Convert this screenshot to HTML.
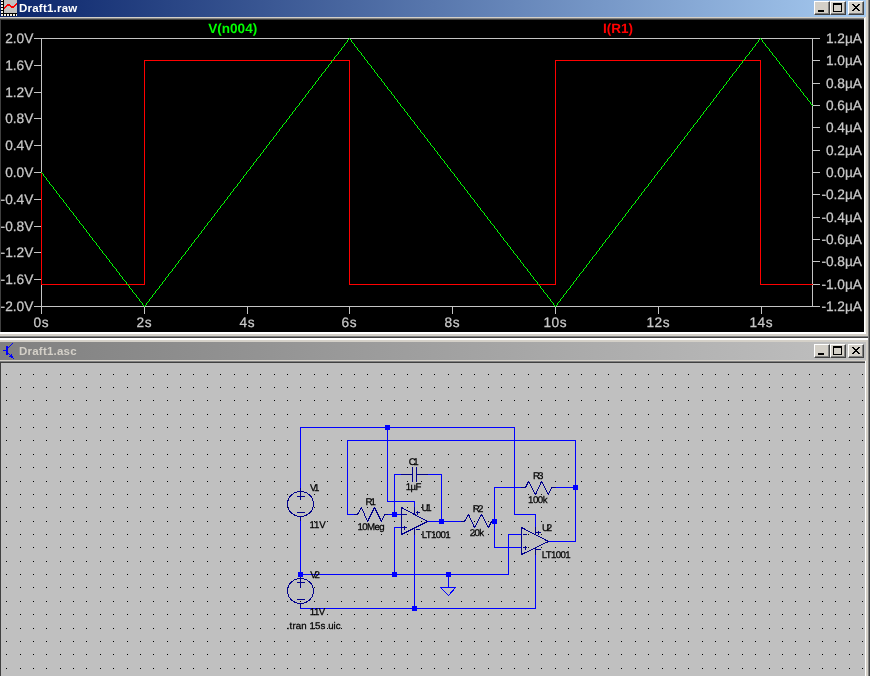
<!DOCTYPE html>
<html>
<head>
<meta charset="utf-8">
<title>LTspice - Draft1</title>
<style>
html,body{margin:0;padding:0;}
body{width:872px;height:676px;overflow:hidden;position:relative;background:#d4d0c8;font-family:"Liberation Sans", sans-serif;}
.abs{position:absolute;}
svg.abs,.ttl{will-change:transform;}
.tb{position:absolute;left:0;width:866px;}
.tb .ttl{position:absolute;left:18.5px;top:1px;font-weight:bold;font-size:11.5px;letter-spacing:0.22px;white-space:nowrap;}
.btn{position:absolute;width:16px;height:14px;box-sizing:border-box;background:#d4d0c8;
 border-top:1px solid #fff;border-left:1px solid #fff;border-right:1px solid #404040;border-bottom:1px solid #404040;}
.btn i{position:absolute;left:0;top:0;right:0;bottom:0;border-right:1px solid #808080;border-bottom:1px solid #808080;}
.btn svg{position:absolute;left:0;top:0;}
svg text{font-family:"Liberation Sans", sans-serif;text-rendering:geometricPrecision;}
</style>
</head>
<body>

<!-- ================= Window 1 : Draft1.raw (waveform) ================= -->
<div class="tb" id="tb1" style="top:0;height:17px;background:linear-gradient(to right,#0a246a 0%,#a6caf0 100%);">
  <svg class="abs" style="left:0;top:0" width="18" height="17" viewBox="0 0 18 17" shape-rendering="crispEdges">
    <rect x="1" y="0" width="16" height="16" fill="#000"/>
    <rect x="4" y="0" width="13" height="13" fill="#c0c0c0"/>
    <g fill="#f4f0e4">
      <rect x="1" y="0" width="2" height="1"/><rect x="1" y="2" width="2" height="2"/><rect x="1" y="5" width="2" height="2"/>
      <rect x="1" y="8" width="2" height="2"/><rect x="1" y="11" width="2" height="2"/><rect x="1" y="14" width="2" height="2"/>
      <rect x="4" y="14" width="2" height="2"/><rect x="7" y="14" width="2" height="2"/><rect x="10" y="14" width="2" height="2"/>
      <rect x="13" y="14" width="2" height="2"/><rect x="16" y="14" width="1" height="2"/>
    </g>
    <path d="M4 7h1v2h-1zM5 6h1v2h-1zM6 5h1v2h-1zM7 4h1v2h-1zM8 4h1v2h-1zM9 4h1v2h-1zM10 5h1v2h-1zM11 6h1v2h-1zM12 6h1v2h-1zM13 6h1v2h-1zM14 5h1v2h-1zM15 4h1v2h-1zM16 3h1v2h-1z" fill="#ff0000"/>
  </svg>
  <span class="ttl" style="color:#fff;line-height:16px;top:0;">Draft1.raw</span>
  <div class="btn" style="left:814px;top:1px;"><i></i><svg width="14" height="12" shape-rendering="crispEdges"><rect x="3" y="8" width="6" height="2" fill="#000"/></svg></div>
  <div class="btn" style="left:830px;top:1px;"><i></i><svg width="14" height="12" shape-rendering="crispEdges"><rect x="2.5" y="1.5" width="8" height="8" fill="none" stroke="#000"/><rect x="2" y="1" width="9" height="2" fill="#000"/></svg></div>
  <div class="btn" style="left:848px;top:1px;"><i></i><svg width="14" height="12" shape-rendering="crispEdges"><path d="M3 2h2v1h-2zM9 2h2v1h-2zM4 3h2v1h-2zM8 3h2v1h-2zM5 4h4v1h-4zM6 5h2v1h-2zM5 6h4v1h-4zM4 7h2v1h-2zM8 7h2v1h-2zM3 8h2v1h-2zM9 8h2v1h-2z" fill="#000"/></svg></div>
</div>
<div class="abs" style="left:0;top:17px;width:866px;height:1px;background:#d4d0c8;"></div>
<div class="abs" style="left:0;top:18px;width:865px;height:1px;background:#808080;"></div>
<div class="abs" style="left:0;top:19px;width:864px;height:1px;background:#404040;"></div>
<!-- client area -->
<div class="abs" id="plotwin" style="left:0;top:20px;width:864px;height:312px;background:#000;border-left:1px solid #404040;box-sizing:border-box;"></div>
<svg class="abs" style="left:0;top:0" width="872" height="340" viewBox="0 0 872 340" shape-rendering="crispEdges">
  <g stroke-width="1" fill="none">
    <line x1="41.5" y1="38.5" x2="41.5" y2="306.5" stroke="#c4c4c4"/><line x1="812.5" y1="38.5" x2="812.5" y2="306.5" stroke="#c4c4c4"/><line x1="34" y1="38.5" x2="819.5" y2="38.5" stroke="#c4c4c4"/><line x1="34" y1="306.5" x2="819.5" y2="306.5" stroke="#c4c4c4"/><line x1="34" y1="38.5" x2="41" y2="38.5" stroke="#c4c4c4"/><line x1="34" y1="65.5" x2="41" y2="65.5" stroke="#c4c4c4"/><line x1="34" y1="92.5" x2="41" y2="92.5" stroke="#c4c4c4"/><line x1="34" y1="118.5" x2="41" y2="118.5" stroke="#c4c4c4"/><line x1="34" y1="145.5" x2="41" y2="145.5" stroke="#c4c4c4"/><line x1="34" y1="172.5" x2="41" y2="172.5" stroke="#c4c4c4"/><line x1="34" y1="199.5" x2="41" y2="199.5" stroke="#c4c4c4"/><line x1="34" y1="226.5" x2="41" y2="226.5" stroke="#c4c4c4"/><line x1="34" y1="252.5" x2="41" y2="252.5" stroke="#c4c4c4"/><line x1="34" y1="279.5" x2="41" y2="279.5" stroke="#c4c4c4"/><line x1="34" y1="306.5" x2="41" y2="306.5" stroke="#c4c4c4"/><line x1="812" y1="38.5" x2="819.5" y2="38.5" stroke="#c4c4c4"/><line x1="812" y1="60.5" x2="819.5" y2="60.5" stroke="#c4c4c4"/><line x1="812" y1="83.5" x2="819.5" y2="83.5" stroke="#c4c4c4"/><line x1="812" y1="105.5" x2="819.5" y2="105.5" stroke="#c4c4c4"/><line x1="812" y1="127.5" x2="819.5" y2="127.5" stroke="#c4c4c4"/><line x1="812" y1="150.5" x2="819.5" y2="150.5" stroke="#c4c4c4"/><line x1="812" y1="172.5" x2="819.5" y2="172.5" stroke="#c4c4c4"/><line x1="812" y1="194.5" x2="819.5" y2="194.5" stroke="#c4c4c4"/><line x1="812" y1="217.5" x2="819.5" y2="217.5" stroke="#c4c4c4"/><line x1="812" y1="239.5" x2="819.5" y2="239.5" stroke="#c4c4c4"/><line x1="812" y1="261.5" x2="819.5" y2="261.5" stroke="#c4c4c4"/><line x1="812" y1="284.5" x2="819.5" y2="284.5" stroke="#c4c4c4"/><line x1="812" y1="306.5" x2="819.5" y2="306.5" stroke="#c4c4c4"/><line x1="41.5" y1="306" x2="41.5" y2="314" stroke="#c4c4c4"/><line x1="144.5" y1="306" x2="144.5" y2="314" stroke="#c4c4c4"/><line x1="247.5" y1="306" x2="247.5" y2="314" stroke="#c4c4c4"/><line x1="349.5" y1="306" x2="349.5" y2="314" stroke="#c4c4c4"/><line x1="452.5" y1="306" x2="452.5" y2="314" stroke="#c4c4c4"/><line x1="555.5" y1="306" x2="555.5" y2="314" stroke="#c4c4c4"/><line x1="658.5" y1="306" x2="658.5" y2="314" stroke="#c4c4c4"/><line x1="761.5" y1="306" x2="761.5" y2="314" stroke="#c4c4c4"/>
    <polyline points="41.5,172.5 41.5,284.5 144.5,284.5 144.5,60.5 349.5,60.5 349.5,284.5 555.5,284.5 555.5,60.5 760.5,60.5 760.5,284.5 812.5,284.5" stroke="#ff0000"/>
    <path d="M41 172h1v1h-1zM42 173h1v1h-1zM43 174h1v2h-1zM44 176h1v1h-1zM45 177h1v1h-1zM46 178h1v2h-1zM47 180h1v1h-1zM48 181h1v1h-1zM49 182h1v2h-1zM50 184h1v1h-1zM51 185h1v1h-1zM52 186h1v1h-1zM53 187h1v2h-1zM54 189h1v1h-1zM55 190h1v1h-1zM56 191h1v2h-1zM57 193h1v1h-1zM58 194h1v1h-1zM59 195h1v2h-1zM60 197h1v1h-1zM61 198h1v1h-1zM62 199h1v1h-1zM63 200h1v2h-1zM64 202h1v1h-1zM65 203h1v1h-1zM66 204h1v2h-1zM67 206h1v1h-1zM68 207h1v1h-1zM69 208h1v2h-1zM70 210h1v1h-1zM71 211h1v1h-1zM72 212h1v1h-1zM73 213h1v2h-1zM74 215h1v1h-1zM75 216h1v1h-1zM76 217h1v2h-1zM77 219h1v1h-1zM78 220h1v1h-1zM79 221h1v2h-1zM80 223h1v1h-1zM81 224h1v1h-1zM82 225h1v1h-1zM83 226h1v2h-1zM84 228h1v1h-1zM85 229h1v1h-1zM86 230h1v2h-1zM87 232h1v1h-1zM88 233h1v1h-1zM89 234h1v2h-1zM90 236h1v1h-1zM91 237h1v1h-1zM92 238h1v2h-1zM93 240h1v1h-1zM94 241h1v1h-1zM95 242h1v1h-1zM96 243h1v2h-1zM97 245h1v1h-1zM98 246h1v1h-1zM99 247h1v2h-1zM100 249h1v1h-1zM101 250h1v1h-1zM102 251h1v2h-1zM103 253h1v1h-1zM104 254h1v1h-1zM105 255h1v1h-1zM106 256h1v2h-1zM107 258h1v1h-1zM108 259h1v1h-1zM109 260h1v2h-1zM110 262h1v1h-1zM111 263h1v1h-1zM112 264h1v2h-1zM113 266h1v1h-1zM114 267h1v1h-1zM115 268h1v1h-1zM116 269h1v2h-1zM117 271h1v1h-1zM118 272h1v1h-1zM119 273h1v2h-1zM120 275h1v1h-1zM121 276h1v1h-1zM122 277h1v2h-1zM123 279h1v1h-1zM124 280h1v1h-1zM125 281h1v1h-1zM126 282h1v2h-1zM127 284h1v1h-1zM128 285h1v1h-1zM129 286h1v2h-1zM130 288h1v1h-1zM131 289h1v1h-1zM132 290h1v2h-1zM133 292h1v1h-1zM134 293h1v1h-1zM135 294h1v1h-1zM136 295h1v2h-1zM137 297h1v1h-1zM138 298h1v1h-1zM139 299h1v2h-1zM140 301h1v1h-1zM141 302h1v1h-1zM142 303h1v2h-1zM143 305h1v1h-1zM144 306h1v1h-1zM145 305h1v1h-1zM146 303h1v2h-1zM147 302h1v1h-1zM148 301h1v1h-1zM149 299h1v2h-1zM150 298h1v1h-1zM151 297h1v1h-1zM152 295h1v2h-1zM153 294h1v1h-1zM154 293h1v1h-1zM155 291h1v2h-1zM156 290h1v1h-1zM157 289h1v1h-1zM158 288h1v1h-1zM159 286h1v2h-1zM160 285h1v1h-1zM161 284h1v1h-1zM162 282h1v2h-1zM163 281h1v1h-1zM164 280h1v1h-1zM165 278h1v2h-1zM166 277h1v1h-1zM167 276h1v1h-1zM168 274h1v2h-1zM169 273h1v1h-1zM170 272h1v1h-1zM171 271h1v1h-1zM172 269h1v2h-1zM173 268h1v1h-1zM174 267h1v1h-1zM175 265h1v2h-1zM176 264h1v1h-1zM177 263h1v1h-1zM178 261h1v2h-1zM179 260h1v1h-1zM180 259h1v1h-1zM181 257h1v2h-1zM182 256h1v1h-1zM183 255h1v1h-1zM184 254h1v1h-1zM185 252h1v2h-1zM186 251h1v1h-1zM187 250h1v1h-1zM188 248h1v2h-1zM189 247h1v1h-1zM190 246h1v1h-1zM191 244h1v2h-1zM192 243h1v1h-1zM193 242h1v1h-1zM194 240h1v2h-1zM195 239h1v1h-1zM196 238h1v1h-1zM197 237h1v1h-1zM198 235h1v2h-1zM199 234h1v1h-1zM200 233h1v1h-1zM201 231h1v2h-1zM202 230h1v1h-1zM203 229h1v1h-1zM204 227h1v2h-1zM205 226h1v1h-1zM206 225h1v1h-1zM207 223h1v2h-1zM208 222h1v1h-1zM209 221h1v1h-1zM210 220h1v1h-1zM211 218h1v2h-1zM212 217h1v1h-1zM213 216h1v1h-1zM214 214h1v2h-1zM215 213h1v1h-1zM216 212h1v1h-1zM217 210h1v2h-1zM218 209h1v1h-1zM219 208h1v1h-1zM220 206h1v2h-1zM221 205h1v1h-1zM222 204h1v1h-1zM223 203h1v1h-1zM224 201h1v2h-1zM225 200h1v1h-1zM226 199h1v1h-1zM227 197h1v2h-1zM228 196h1v1h-1zM229 195h1v1h-1zM230 193h1v2h-1zM231 192h1v1h-1zM232 191h1v1h-1zM233 189h1v2h-1zM234 188h1v1h-1zM235 187h1v1h-1zM236 186h1v1h-1zM237 184h1v2h-1zM238 183h1v1h-1zM239 182h1v1h-1zM240 180h1v2h-1zM241 179h1v1h-1zM242 178h1v1h-1zM243 176h1v2h-1zM244 175h1v1h-1zM245 174h1v1h-1zM246 172h1v2h-1zM247 171h1v1h-1zM248 170h1v1h-1zM249 169h1v1h-1zM250 167h1v2h-1zM251 166h1v1h-1zM252 165h1v1h-1zM253 163h1v2h-1zM254 162h1v1h-1zM255 161h1v1h-1zM256 159h1v2h-1zM257 158h1v1h-1zM258 157h1v1h-1zM259 156h1v1h-1zM260 154h1v2h-1zM261 153h1v1h-1zM262 152h1v1h-1zM263 150h1v2h-1zM264 149h1v1h-1zM265 148h1v1h-1zM266 146h1v2h-1zM267 145h1v1h-1zM268 144h1v1h-1zM269 142h1v2h-1zM270 141h1v1h-1zM271 140h1v1h-1zM272 139h1v1h-1zM273 137h1v2h-1zM274 136h1v1h-1zM275 135h1v1h-1zM276 133h1v2h-1zM277 132h1v1h-1zM278 131h1v1h-1zM279 129h1v2h-1zM280 128h1v1h-1zM281 127h1v1h-1zM282 125h1v2h-1zM283 124h1v1h-1zM284 123h1v1h-1zM285 122h1v1h-1zM286 120h1v2h-1zM287 119h1v1h-1zM288 118h1v1h-1zM289 116h1v2h-1zM290 115h1v1h-1zM291 114h1v1h-1zM292 112h1v2h-1zM293 111h1v1h-1zM294 110h1v1h-1zM295 108h1v2h-1zM296 107h1v1h-1zM297 106h1v1h-1zM298 105h1v1h-1zM299 103h1v2h-1zM300 102h1v1h-1zM301 101h1v1h-1zM302 99h1v2h-1zM303 98h1v1h-1zM304 97h1v1h-1zM305 95h1v2h-1zM306 94h1v1h-1zM307 93h1v1h-1zM308 91h1v2h-1zM309 90h1v1h-1zM310 89h1v1h-1zM311 88h1v1h-1zM312 86h1v2h-1zM313 85h1v1h-1zM314 84h1v1h-1zM315 82h1v2h-1zM316 81h1v1h-1zM317 80h1v1h-1zM318 78h1v2h-1zM319 77h1v1h-1zM320 76h1v1h-1zM321 74h1v2h-1zM322 73h1v1h-1zM323 72h1v1h-1zM324 71h1v1h-1zM325 69h1v2h-1zM326 68h1v1h-1zM327 67h1v1h-1zM328 65h1v2h-1zM329 64h1v1h-1zM330 63h1v1h-1zM331 61h1v2h-1zM332 60h1v1h-1zM333 59h1v1h-1zM334 57h1v2h-1zM335 56h1v1h-1zM336 55h1v1h-1zM337 54h1v1h-1zM338 52h1v2h-1zM339 51h1v1h-1zM340 50h1v1h-1zM341 48h1v2h-1zM342 47h1v1h-1zM343 46h1v1h-1zM344 44h1v2h-1zM345 43h1v1h-1zM346 42h1v1h-1zM347 40h1v2h-1zM348 39h1v1h-1zM349 38h1v1h-1zM350 39h1v1h-1zM351 40h1v2h-1zM352 42h1v1h-1zM353 43h1v1h-1zM354 44h1v2h-1zM355 46h1v1h-1zM356 47h1v1h-1zM357 48h1v2h-1zM358 50h1v1h-1zM359 51h1v1h-1zM360 52h1v1h-1zM361 53h1v2h-1zM362 55h1v1h-1zM363 56h1v1h-1zM364 57h1v2h-1zM365 59h1v1h-1zM366 60h1v1h-1zM367 61h1v2h-1zM368 63h1v1h-1zM369 64h1v1h-1zM370 65h1v1h-1zM371 66h1v2h-1zM372 68h1v1h-1zM373 69h1v1h-1zM374 70h1v2h-1zM375 72h1v1h-1zM376 73h1v1h-1zM377 74h1v2h-1zM378 76h1v1h-1zM379 77h1v1h-1zM380 78h1v1h-1zM381 79h1v2h-1zM382 81h1v1h-1zM383 82h1v1h-1zM384 83h1v2h-1zM385 85h1v1h-1zM386 86h1v1h-1zM387 87h1v2h-1zM388 89h1v1h-1zM389 90h1v1h-1zM390 91h1v1h-1zM391 92h1v2h-1zM392 94h1v1h-1zM393 95h1v1h-1zM394 96h1v2h-1zM395 98h1v1h-1zM396 99h1v1h-1zM397 100h1v2h-1zM398 102h1v1h-1zM399 103h1v1h-1zM400 104h1v2h-1zM401 106h1v1h-1zM402 107h1v1h-1zM403 108h1v1h-1zM404 109h1v2h-1zM405 111h1v1h-1zM406 112h1v1h-1zM407 113h1v2h-1zM408 115h1v1h-1zM409 116h1v1h-1zM410 117h1v2h-1zM411 119h1v1h-1zM412 120h1v1h-1zM413 121h1v1h-1zM414 122h1v2h-1zM415 124h1v1h-1zM416 125h1v1h-1zM417 126h1v2h-1zM418 128h1v1h-1zM419 129h1v1h-1zM420 130h1v2h-1zM421 132h1v1h-1zM422 133h1v1h-1zM423 134h1v1h-1zM424 135h1v2h-1zM425 137h1v1h-1zM426 138h1v1h-1zM427 139h1v2h-1zM428 141h1v1h-1zM429 142h1v1h-1zM430 143h1v2h-1zM431 145h1v1h-1zM432 146h1v1h-1zM433 147h1v1h-1zM434 148h1v2h-1zM435 150h1v1h-1zM436 151h1v1h-1zM437 152h1v2h-1zM438 154h1v1h-1zM439 155h1v1h-1zM440 156h1v2h-1zM441 158h1v1h-1zM442 159h1v1h-1zM443 160h1v1h-1zM444 161h1v2h-1zM445 163h1v1h-1zM446 164h1v1h-1zM447 165h1v2h-1zM448 167h1v1h-1zM449 168h1v1h-1zM450 169h1v2h-1zM451 171h1v1h-1zM452 172h1v1h-1zM453 173h1v1h-1zM454 174h1v2h-1zM455 176h1v1h-1zM456 177h1v1h-1zM457 178h1v2h-1zM458 180h1v1h-1zM459 181h1v1h-1zM460 182h1v2h-1zM461 184h1v1h-1zM462 185h1v1h-1zM463 186h1v1h-1zM464 187h1v2h-1zM465 189h1v1h-1zM466 190h1v1h-1zM467 191h1v2h-1zM468 193h1v1h-1zM469 194h1v1h-1zM470 195h1v2h-1zM471 197h1v1h-1zM472 198h1v1h-1zM473 199h1v1h-1zM474 200h1v2h-1zM475 202h1v1h-1zM476 203h1v1h-1zM477 204h1v2h-1zM478 206h1v1h-1zM479 207h1v1h-1zM480 208h1v2h-1zM481 210h1v1h-1zM482 211h1v1h-1zM483 212h1v1h-1zM484 213h1v2h-1zM485 215h1v1h-1zM486 216h1v1h-1zM487 217h1v2h-1zM488 219h1v1h-1zM489 220h1v1h-1zM490 221h1v2h-1zM491 223h1v1h-1zM492 224h1v1h-1zM493 225h1v1h-1zM494 226h1v2h-1zM495 228h1v1h-1zM496 229h1v1h-1zM497 230h1v2h-1zM498 232h1v1h-1zM499 233h1v1h-1zM500 234h1v2h-1zM501 236h1v1h-1zM502 237h1v1h-1zM503 238h1v2h-1zM504 240h1v1h-1zM505 241h1v1h-1zM506 242h1v1h-1zM507 243h1v2h-1zM508 245h1v1h-1zM509 246h1v1h-1zM510 247h1v2h-1zM511 249h1v1h-1zM512 250h1v1h-1zM513 251h1v2h-1zM514 253h1v1h-1zM515 254h1v1h-1zM516 255h1v1h-1zM517 256h1v2h-1zM518 258h1v1h-1zM519 259h1v1h-1zM520 260h1v2h-1zM521 262h1v1h-1zM522 263h1v1h-1zM523 264h1v2h-1zM524 266h1v1h-1zM525 267h1v1h-1zM526 268h1v1h-1zM527 269h1v2h-1zM528 271h1v1h-1zM529 272h1v1h-1zM530 273h1v2h-1zM531 275h1v1h-1zM532 276h1v1h-1zM533 277h1v2h-1zM534 279h1v1h-1zM535 280h1v1h-1zM536 281h1v1h-1zM537 282h1v2h-1zM538 284h1v1h-1zM539 285h1v1h-1zM540 286h1v2h-1zM541 288h1v1h-1zM542 289h1v1h-1zM543 290h1v2h-1zM544 292h1v1h-1zM545 293h1v1h-1zM546 294h1v1h-1zM547 295h1v2h-1zM548 297h1v1h-1zM549 298h1v1h-1zM550 299h1v2h-1zM551 301h1v1h-1zM552 302h1v1h-1zM553 303h1v2h-1zM554 305h1v1h-1zM555 306h1v1h-1zM556 305h1v1h-1zM557 303h1v2h-1zM558 302h1v1h-1zM559 301h1v1h-1zM560 299h1v2h-1zM561 298h1v1h-1zM562 297h1v1h-1zM563 295h1v2h-1zM564 294h1v1h-1zM565 293h1v1h-1zM566 291h1v2h-1zM567 290h1v1h-1zM568 289h1v1h-1zM569 288h1v1h-1zM570 286h1v2h-1zM571 285h1v1h-1zM572 284h1v1h-1zM573 282h1v2h-1zM574 281h1v1h-1zM575 280h1v1h-1zM576 278h1v2h-1zM577 277h1v1h-1zM578 276h1v1h-1zM579 274h1v2h-1zM580 273h1v1h-1zM581 272h1v1h-1zM582 271h1v1h-1zM583 269h1v2h-1zM584 268h1v1h-1zM585 267h1v1h-1zM586 265h1v2h-1zM587 264h1v1h-1zM588 263h1v1h-1zM589 261h1v2h-1zM590 260h1v1h-1zM591 259h1v1h-1zM592 257h1v2h-1zM593 256h1v1h-1zM594 255h1v1h-1zM595 254h1v1h-1zM596 252h1v2h-1zM597 251h1v1h-1zM598 250h1v1h-1zM599 248h1v2h-1zM600 247h1v1h-1zM601 246h1v1h-1zM602 244h1v2h-1zM603 243h1v1h-1zM604 242h1v1h-1zM605 240h1v2h-1zM606 239h1v1h-1zM607 238h1v1h-1zM608 237h1v1h-1zM609 235h1v2h-1zM610 234h1v1h-1zM611 233h1v1h-1zM612 231h1v2h-1zM613 230h1v1h-1zM614 229h1v1h-1zM615 227h1v2h-1zM616 226h1v1h-1zM617 225h1v1h-1zM618 223h1v2h-1zM619 222h1v1h-1zM620 221h1v1h-1zM621 220h1v1h-1zM622 218h1v2h-1zM623 217h1v1h-1zM624 216h1v1h-1zM625 214h1v2h-1zM626 213h1v1h-1zM627 212h1v1h-1zM628 210h1v2h-1zM629 209h1v1h-1zM630 208h1v1h-1zM631 206h1v2h-1zM632 205h1v1h-1zM633 204h1v1h-1zM634 203h1v1h-1zM635 201h1v2h-1zM636 200h1v1h-1zM637 199h1v1h-1zM638 197h1v2h-1zM639 196h1v1h-1zM640 195h1v1h-1zM641 193h1v2h-1zM642 192h1v1h-1zM643 191h1v1h-1zM644 189h1v2h-1zM645 188h1v1h-1zM646 187h1v1h-1zM647 186h1v1h-1zM648 184h1v2h-1zM649 183h1v1h-1zM650 182h1v1h-1zM651 180h1v2h-1zM652 179h1v1h-1zM653 178h1v1h-1zM654 176h1v2h-1zM655 175h1v1h-1zM656 174h1v1h-1zM657 172h1v2h-1zM658 171h1v1h-1zM659 170h1v1h-1zM660 169h1v1h-1zM661 167h1v2h-1zM662 166h1v1h-1zM663 165h1v1h-1zM664 163h1v2h-1zM665 162h1v1h-1zM666 161h1v1h-1zM667 159h1v2h-1zM668 158h1v1h-1zM669 157h1v1h-1zM670 156h1v1h-1zM671 154h1v2h-1zM672 153h1v1h-1zM673 152h1v1h-1zM674 150h1v2h-1zM675 149h1v1h-1zM676 148h1v1h-1zM677 146h1v2h-1zM678 145h1v1h-1zM679 144h1v1h-1zM680 142h1v2h-1zM681 141h1v1h-1zM682 140h1v1h-1zM683 139h1v1h-1zM684 137h1v2h-1zM685 136h1v1h-1zM686 135h1v1h-1zM687 133h1v2h-1zM688 132h1v1h-1zM689 131h1v1h-1zM690 129h1v2h-1zM691 128h1v1h-1zM692 127h1v1h-1zM693 125h1v2h-1zM694 124h1v1h-1zM695 123h1v1h-1zM696 122h1v1h-1zM697 120h1v2h-1zM698 119h1v1h-1zM699 118h1v1h-1zM700 116h1v2h-1zM701 115h1v1h-1zM702 114h1v1h-1zM703 112h1v2h-1zM704 111h1v1h-1zM705 110h1v1h-1zM706 108h1v2h-1zM707 107h1v1h-1zM708 106h1v1h-1zM709 105h1v1h-1zM710 103h1v2h-1zM711 102h1v1h-1zM712 101h1v1h-1zM713 99h1v2h-1zM714 98h1v1h-1zM715 97h1v1h-1zM716 95h1v2h-1zM717 94h1v1h-1zM718 93h1v1h-1zM719 91h1v2h-1zM720 90h1v1h-1zM721 89h1v1h-1zM722 88h1v1h-1zM723 86h1v2h-1zM724 85h1v1h-1zM725 84h1v1h-1zM726 82h1v2h-1zM727 81h1v1h-1zM728 80h1v1h-1zM729 78h1v2h-1zM730 77h1v1h-1zM731 76h1v1h-1zM732 74h1v2h-1zM733 73h1v1h-1zM734 72h1v1h-1zM735 71h1v1h-1zM736 69h1v2h-1zM737 68h1v1h-1zM738 67h1v1h-1zM739 65h1v2h-1zM740 64h1v1h-1zM741 63h1v1h-1zM742 61h1v2h-1zM743 60h1v1h-1zM744 59h1v1h-1zM745 57h1v2h-1zM746 56h1v1h-1zM747 55h1v1h-1zM748 54h1v1h-1zM749 52h1v2h-1zM750 51h1v1h-1zM751 50h1v1h-1zM752 48h1v2h-1zM753 47h1v1h-1zM754 46h1v1h-1zM755 44h1v2h-1zM756 43h1v1h-1zM757 42h1v1h-1zM758 40h1v2h-1zM759 39h1v1h-1zM760 38h1v1h-1zM761 39h1v1h-1zM762 40h1v2h-1zM763 42h1v1h-1zM764 43h1v1h-1zM765 44h1v2h-1zM766 46h1v1h-1zM767 47h1v1h-1zM768 48h1v1h-1zM769 49h1v2h-1zM770 51h1v1h-1zM771 52h1v1h-1zM772 53h1v2h-1zM773 55h1v1h-1zM774 56h1v1h-1zM775 57h1v1h-1zM776 58h1v2h-1zM777 60h1v1h-1zM778 61h1v1h-1zM779 62h1v2h-1zM780 64h1v1h-1zM781 65h1v1h-1zM782 66h1v1h-1zM783 67h1v2h-1zM784 69h1v1h-1zM785 70h1v1h-1zM786 71h1v2h-1zM787 73h1v1h-1zM788 74h1v1h-1zM789 75h1v2h-1zM790 77h1v1h-1zM791 78h1v1h-1zM792 79h1v1h-1zM793 80h1v2h-1zM794 82h1v1h-1zM795 83h1v1h-1zM796 84h1v2h-1zM797 86h1v1h-1zM798 87h1v1h-1zM799 88h1v1h-1zM800 89h1v2h-1zM801 91h1v1h-1zM802 92h1v1h-1zM803 93h1v2h-1zM804 95h1v1h-1zM805 96h1v1h-1zM806 97h1v1h-1zM807 98h1v2h-1zM808 100h1v1h-1zM809 101h1v1h-1zM810 102h1v2h-1zM811 104h1v1h-1zM812 105h1v1h-1z" fill="#00ff00" stroke="none"/>
  </g>
  <g font-size="13.7px" fill="#c8c8c8" stroke="#c8c8c8" stroke-width="0.25">
    <text x="33.3" y="42.9" text-anchor="end">2.0V</text><text x="33.3" y="69.9" text-anchor="end">1.6V</text><text x="33.3" y="96.9" text-anchor="end">1.2V</text><text x="33.3" y="122.9" text-anchor="end">0.8V</text><text x="33.3" y="149.9" text-anchor="end">0.4V</text><text x="33.3" y="176.9" text-anchor="end">0.0V</text><text x="33.3" y="203.9" text-anchor="end">-0.4V</text><text x="33.3" y="230.9" text-anchor="end">-0.8V</text><text x="33.3" y="256.9" text-anchor="end">-1.2V</text><text x="33.3" y="283.9" text-anchor="end">-1.6V</text><text x="33.3" y="310.9" text-anchor="end">-2.0V</text><text x="862" y="42.9" text-anchor="end">1.2µA</text><text x="862" y="64.9" text-anchor="end">1.0µA</text><text x="862" y="87.9" text-anchor="end">0.8µA</text><text x="862" y="109.9" text-anchor="end">0.6µA</text><text x="862" y="131.9" text-anchor="end">0.4µA</text><text x="862" y="154.9" text-anchor="end">0.2µA</text><text x="862" y="176.9" text-anchor="end">0.0µA</text><text x="862" y="198.9" text-anchor="end">-0.2µA</text><text x="862" y="221.9" text-anchor="end">-0.4µA</text><text x="862" y="243.9" text-anchor="end">-0.6µA</text><text x="862" y="265.9" text-anchor="end">-0.8µA</text><text x="862" y="288.9" text-anchor="end">-1.0µA</text><text x="862" y="310.9" text-anchor="end">-1.2µA</text><text x="41.3" y="327" text-anchor="middle" letter-spacing="0.5">0s</text><text x="144.3" y="327" text-anchor="middle" letter-spacing="0.5">2s</text><text x="247.3" y="327" text-anchor="middle" letter-spacing="0.5">4s</text><text x="349.3" y="327" text-anchor="middle" letter-spacing="0.5">6s</text><text x="452.3" y="327" text-anchor="middle" letter-spacing="0.5">8s</text><text x="555.3" y="327" text-anchor="middle" letter-spacing="0.5">10s</text><text x="658.3" y="327" text-anchor="middle" letter-spacing="0.5">12s</text><text x="761.3" y="327" text-anchor="middle" letter-spacing="0.5">14s</text>
  </g>
  <text x="232.7" y="33" font-size="13.6px" font-weight="bold" fill="#00ff00" text-anchor="middle">V(n004)</text>
  <text x="618" y="33" font-size="13.6px" font-weight="bold" fill="#ff0000" text-anchor="middle">I(R1)</text>
</svg>
<!-- window-1 bottom / right frame -->
<div class="abs" style="left:864px;top:18px;width:1px;height:316px;background:#fff;"></div>
<div class="abs" style="left:865px;top:17px;width:1px;height:317px;background:#f0eee8;"></div>
<div class="abs" style="left:0;top:332px;width:866px;height:2px;background:#fff;"></div>
<div class="abs" style="left:0;top:334px;width:868px;height:2px;background:#d4d0c8;"></div>
<div class="abs" style="left:0;top:336px;width:869px;height:1px;background:#808080;"></div>
<div class="abs" style="left:0;top:337px;width:870px;height:1px;background:#404040;"></div>

<!-- ================= Window 2 : Draft1.asc (schematic) ================= -->
<div class="abs" style="left:0;top:338px;width:868px;height:2px;background:#fff;"></div>
<div class="abs" style="left:0;top:340px;width:868px;height:2px;background:#d4d0c8;"></div>
<div class="tb" id="tb2" style="top:342px;height:18px;background:linear-gradient(to right,#808080 0%,#c0c0c0 100%);">
  <svg class="abs" style="left:0;top:0" width="18" height="18" viewBox="0 0 18 18" shape-rendering="crispEdges">
    <g fill="#0000ff"><rect x="6" y="4" width="2" height="9"/><rect x="3" y="8" width="3" height="1"/><path d="M8 5h1v1h-1zM9 4h1v1h-1zM10 3h1v1h-1zM11 2h1v1h-1zM12 1h1v1h-1zM8 11h1v1h-1zM9 12h1v1h-1zM10 13h1v1h-1zM11 14h1v1h-1zM12 15h1v1h-1zM13 16h1v1h-1zM9 14h1v1h-1zM10 14h1v1h-1zM12 14h1v1h-1zM11 12h1v1h-1zM11 13h1v1h-1zM11 15h1v1h-1z"/></g>
  </svg>
  <span class="ttl" style="color:#d4d0c8;line-height:17px;">Draft1.asc</span>
  <div class="btn" style="left:814px;top:2px;"><i></i><svg width="14" height="12" shape-rendering="crispEdges"><rect x="3" y="8" width="6" height="2" fill="#000"/></svg></div>
  <div class="btn" style="left:830px;top:2px;"><i></i><svg width="14" height="12" shape-rendering="crispEdges"><rect x="2.5" y="1.5" width="8" height="8" fill="none" stroke="#000"/><rect x="2" y="1" width="9" height="2" fill="#000"/></svg></div>
  <div class="btn" style="left:848px;top:2px;"><i></i><svg width="14" height="12" shape-rendering="crispEdges"><path d="M3 2h2v1h-2zM9 2h2v1h-2zM4 3h2v1h-2zM8 3h2v1h-2zM5 4h4v1h-4zM6 5h2v1h-2zM5 6h4v1h-4zM4 7h2v1h-2zM8 7h2v1h-2zM3 8h2v1h-2zM9 8h2v1h-2z" fill="#000"/></svg></div>
</div>
<div class="abs" style="left:0;top:360px;width:866px;height:1px;background:#d4d0c8;"></div>
<div class="abs" style="left:0;top:361px;width:865px;height:1px;background:#808080;"></div>
<div class="abs" style="left:0;top:362px;width:865px;height:1px;background:#404040;"></div>
<div class="abs" id="schwin" style="left:0;top:363px;width:865px;height:313px;background:#c0c0c0;border-left:1px solid #404040;box-sizing:border-box;"></div>
<div class="abs" style="left:865px;top:361px;width:1px;height:315px;background:#fff;"></div>
<svg class="abs" style="left:0;top:0" width="872" height="676" viewBox="0 0 872 676" shape-rendering="crispEdges">
  <path d="M6 374h1v1h-1zM20 374h1v1h-1zM33 374h1v1h-1zM46 374h1v1h-1zM60 374h1v1h-1zM73 374h1v1h-1zM86 374h1v1h-1zM100 374h1v1h-1zM113 374h1v1h-1zM127 374h1v1h-1zM140 374h1v1h-1zM153 374h1v1h-1zM167 374h1v1h-1zM180 374h1v1h-1zM193 374h1v1h-1zM207 374h1v1h-1zM220 374h1v1h-1zM234 374h1v1h-1zM247 374h1v1h-1zM260 374h1v1h-1zM274 374h1v1h-1zM287 374h1v1h-1zM300 374h1v1h-1zM314 374h1v1h-1zM327 374h1v1h-1zM341 374h1v1h-1zM354 374h1v1h-1zM367 374h1v1h-1zM381 374h1v1h-1zM394 374h1v1h-1zM407 374h1v1h-1zM421 374h1v1h-1zM434 374h1v1h-1zM448 374h1v1h-1zM461 374h1v1h-1zM474 374h1v1h-1zM488 374h1v1h-1zM501 374h1v1h-1zM514 374h1v1h-1zM528 374h1v1h-1zM541 374h1v1h-1zM555 374h1v1h-1zM568 374h1v1h-1zM581 374h1v1h-1zM595 374h1v1h-1zM608 374h1v1h-1zM621 374h1v1h-1zM635 374h1v1h-1zM648 374h1v1h-1zM662 374h1v1h-1zM675 374h1v1h-1zM688 374h1v1h-1zM702 374h1v1h-1zM715 374h1v1h-1zM728 374h1v1h-1zM742 374h1v1h-1zM755 374h1v1h-1zM769 374h1v1h-1zM782 374h1v1h-1zM795 374h1v1h-1zM809 374h1v1h-1zM822 374h1v1h-1zM835 374h1v1h-1zM849 374h1v1h-1zM862 374h1v1h-1zM6 387h1v1h-1zM20 387h1v1h-1zM33 387h1v1h-1zM46 387h1v1h-1zM60 387h1v1h-1zM73 387h1v1h-1zM86 387h1v1h-1zM100 387h1v1h-1zM113 387h1v1h-1zM127 387h1v1h-1zM140 387h1v1h-1zM153 387h1v1h-1zM167 387h1v1h-1zM180 387h1v1h-1zM193 387h1v1h-1zM207 387h1v1h-1zM220 387h1v1h-1zM234 387h1v1h-1zM247 387h1v1h-1zM260 387h1v1h-1zM274 387h1v1h-1zM287 387h1v1h-1zM300 387h1v1h-1zM314 387h1v1h-1zM327 387h1v1h-1zM341 387h1v1h-1zM354 387h1v1h-1zM367 387h1v1h-1zM381 387h1v1h-1zM394 387h1v1h-1zM407 387h1v1h-1zM421 387h1v1h-1zM434 387h1v1h-1zM448 387h1v1h-1zM461 387h1v1h-1zM474 387h1v1h-1zM488 387h1v1h-1zM501 387h1v1h-1zM514 387h1v1h-1zM528 387h1v1h-1zM541 387h1v1h-1zM555 387h1v1h-1zM568 387h1v1h-1zM581 387h1v1h-1zM595 387h1v1h-1zM608 387h1v1h-1zM621 387h1v1h-1zM635 387h1v1h-1zM648 387h1v1h-1zM662 387h1v1h-1zM675 387h1v1h-1zM688 387h1v1h-1zM702 387h1v1h-1zM715 387h1v1h-1zM728 387h1v1h-1zM742 387h1v1h-1zM755 387h1v1h-1zM769 387h1v1h-1zM782 387h1v1h-1zM795 387h1v1h-1zM809 387h1v1h-1zM822 387h1v1h-1zM835 387h1v1h-1zM849 387h1v1h-1zM862 387h1v1h-1zM6 400h1v1h-1zM20 400h1v1h-1zM33 400h1v1h-1zM46 400h1v1h-1zM60 400h1v1h-1zM73 400h1v1h-1zM86 400h1v1h-1zM100 400h1v1h-1zM113 400h1v1h-1zM127 400h1v1h-1zM140 400h1v1h-1zM153 400h1v1h-1zM167 400h1v1h-1zM180 400h1v1h-1zM193 400h1v1h-1zM207 400h1v1h-1zM220 400h1v1h-1zM234 400h1v1h-1zM247 400h1v1h-1zM260 400h1v1h-1zM274 400h1v1h-1zM287 400h1v1h-1zM300 400h1v1h-1zM314 400h1v1h-1zM327 400h1v1h-1zM341 400h1v1h-1zM354 400h1v1h-1zM367 400h1v1h-1zM381 400h1v1h-1zM394 400h1v1h-1zM407 400h1v1h-1zM421 400h1v1h-1zM434 400h1v1h-1zM448 400h1v1h-1zM461 400h1v1h-1zM474 400h1v1h-1zM488 400h1v1h-1zM501 400h1v1h-1zM514 400h1v1h-1zM528 400h1v1h-1zM541 400h1v1h-1zM555 400h1v1h-1zM568 400h1v1h-1zM581 400h1v1h-1zM595 400h1v1h-1zM608 400h1v1h-1zM621 400h1v1h-1zM635 400h1v1h-1zM648 400h1v1h-1zM662 400h1v1h-1zM675 400h1v1h-1zM688 400h1v1h-1zM702 400h1v1h-1zM715 400h1v1h-1zM728 400h1v1h-1zM742 400h1v1h-1zM755 400h1v1h-1zM769 400h1v1h-1zM782 400h1v1h-1zM795 400h1v1h-1zM809 400h1v1h-1zM822 400h1v1h-1zM835 400h1v1h-1zM849 400h1v1h-1zM862 400h1v1h-1zM6 414h1v1h-1zM20 414h1v1h-1zM33 414h1v1h-1zM46 414h1v1h-1zM60 414h1v1h-1zM73 414h1v1h-1zM86 414h1v1h-1zM100 414h1v1h-1zM113 414h1v1h-1zM127 414h1v1h-1zM140 414h1v1h-1zM153 414h1v1h-1zM167 414h1v1h-1zM180 414h1v1h-1zM193 414h1v1h-1zM207 414h1v1h-1zM220 414h1v1h-1zM234 414h1v1h-1zM247 414h1v1h-1zM260 414h1v1h-1zM274 414h1v1h-1zM287 414h1v1h-1zM300 414h1v1h-1zM314 414h1v1h-1zM327 414h1v1h-1zM341 414h1v1h-1zM354 414h1v1h-1zM367 414h1v1h-1zM381 414h1v1h-1zM394 414h1v1h-1zM407 414h1v1h-1zM421 414h1v1h-1zM434 414h1v1h-1zM448 414h1v1h-1zM461 414h1v1h-1zM474 414h1v1h-1zM488 414h1v1h-1zM501 414h1v1h-1zM514 414h1v1h-1zM528 414h1v1h-1zM541 414h1v1h-1zM555 414h1v1h-1zM568 414h1v1h-1zM581 414h1v1h-1zM595 414h1v1h-1zM608 414h1v1h-1zM621 414h1v1h-1zM635 414h1v1h-1zM648 414h1v1h-1zM662 414h1v1h-1zM675 414h1v1h-1zM688 414h1v1h-1zM702 414h1v1h-1zM715 414h1v1h-1zM728 414h1v1h-1zM742 414h1v1h-1zM755 414h1v1h-1zM769 414h1v1h-1zM782 414h1v1h-1zM795 414h1v1h-1zM809 414h1v1h-1zM822 414h1v1h-1zM835 414h1v1h-1zM849 414h1v1h-1zM862 414h1v1h-1zM6 427h1v1h-1zM20 427h1v1h-1zM33 427h1v1h-1zM46 427h1v1h-1zM60 427h1v1h-1zM73 427h1v1h-1zM86 427h1v1h-1zM100 427h1v1h-1zM113 427h1v1h-1zM127 427h1v1h-1zM140 427h1v1h-1zM153 427h1v1h-1zM167 427h1v1h-1zM180 427h1v1h-1zM193 427h1v1h-1zM207 427h1v1h-1zM220 427h1v1h-1zM234 427h1v1h-1zM247 427h1v1h-1zM260 427h1v1h-1zM274 427h1v1h-1zM287 427h1v1h-1zM300 427h1v1h-1zM314 427h1v1h-1zM327 427h1v1h-1zM341 427h1v1h-1zM354 427h1v1h-1zM367 427h1v1h-1zM381 427h1v1h-1zM394 427h1v1h-1zM407 427h1v1h-1zM421 427h1v1h-1zM434 427h1v1h-1zM448 427h1v1h-1zM461 427h1v1h-1zM474 427h1v1h-1zM488 427h1v1h-1zM501 427h1v1h-1zM514 427h1v1h-1zM528 427h1v1h-1zM541 427h1v1h-1zM555 427h1v1h-1zM568 427h1v1h-1zM581 427h1v1h-1zM595 427h1v1h-1zM608 427h1v1h-1zM621 427h1v1h-1zM635 427h1v1h-1zM648 427h1v1h-1zM662 427h1v1h-1zM675 427h1v1h-1zM688 427h1v1h-1zM702 427h1v1h-1zM715 427h1v1h-1zM728 427h1v1h-1zM742 427h1v1h-1zM755 427h1v1h-1zM769 427h1v1h-1zM782 427h1v1h-1zM795 427h1v1h-1zM809 427h1v1h-1zM822 427h1v1h-1zM835 427h1v1h-1zM849 427h1v1h-1zM862 427h1v1h-1zM6 440h1v1h-1zM20 440h1v1h-1zM33 440h1v1h-1zM46 440h1v1h-1zM60 440h1v1h-1zM73 440h1v1h-1zM86 440h1v1h-1zM100 440h1v1h-1zM113 440h1v1h-1zM127 440h1v1h-1zM140 440h1v1h-1zM153 440h1v1h-1zM167 440h1v1h-1zM180 440h1v1h-1zM193 440h1v1h-1zM207 440h1v1h-1zM220 440h1v1h-1zM234 440h1v1h-1zM247 440h1v1h-1zM260 440h1v1h-1zM274 440h1v1h-1zM287 440h1v1h-1zM300 440h1v1h-1zM314 440h1v1h-1zM327 440h1v1h-1zM341 440h1v1h-1zM354 440h1v1h-1zM367 440h1v1h-1zM381 440h1v1h-1zM394 440h1v1h-1zM407 440h1v1h-1zM421 440h1v1h-1zM434 440h1v1h-1zM448 440h1v1h-1zM461 440h1v1h-1zM474 440h1v1h-1zM488 440h1v1h-1zM501 440h1v1h-1zM514 440h1v1h-1zM528 440h1v1h-1zM541 440h1v1h-1zM555 440h1v1h-1zM568 440h1v1h-1zM581 440h1v1h-1zM595 440h1v1h-1zM608 440h1v1h-1zM621 440h1v1h-1zM635 440h1v1h-1zM648 440h1v1h-1zM662 440h1v1h-1zM675 440h1v1h-1zM688 440h1v1h-1zM702 440h1v1h-1zM715 440h1v1h-1zM728 440h1v1h-1zM742 440h1v1h-1zM755 440h1v1h-1zM769 440h1v1h-1zM782 440h1v1h-1zM795 440h1v1h-1zM809 440h1v1h-1zM822 440h1v1h-1zM835 440h1v1h-1zM849 440h1v1h-1zM862 440h1v1h-1zM6 454h1v1h-1zM20 454h1v1h-1zM33 454h1v1h-1zM46 454h1v1h-1zM60 454h1v1h-1zM73 454h1v1h-1zM86 454h1v1h-1zM100 454h1v1h-1zM113 454h1v1h-1zM127 454h1v1h-1zM140 454h1v1h-1zM153 454h1v1h-1zM167 454h1v1h-1zM180 454h1v1h-1zM193 454h1v1h-1zM207 454h1v1h-1zM220 454h1v1h-1zM234 454h1v1h-1zM247 454h1v1h-1zM260 454h1v1h-1zM274 454h1v1h-1zM287 454h1v1h-1zM300 454h1v1h-1zM314 454h1v1h-1zM327 454h1v1h-1zM341 454h1v1h-1zM354 454h1v1h-1zM367 454h1v1h-1zM381 454h1v1h-1zM394 454h1v1h-1zM407 454h1v1h-1zM421 454h1v1h-1zM434 454h1v1h-1zM448 454h1v1h-1zM461 454h1v1h-1zM474 454h1v1h-1zM488 454h1v1h-1zM501 454h1v1h-1zM514 454h1v1h-1zM528 454h1v1h-1zM541 454h1v1h-1zM555 454h1v1h-1zM568 454h1v1h-1zM581 454h1v1h-1zM595 454h1v1h-1zM608 454h1v1h-1zM621 454h1v1h-1zM635 454h1v1h-1zM648 454h1v1h-1zM662 454h1v1h-1zM675 454h1v1h-1zM688 454h1v1h-1zM702 454h1v1h-1zM715 454h1v1h-1zM728 454h1v1h-1zM742 454h1v1h-1zM755 454h1v1h-1zM769 454h1v1h-1zM782 454h1v1h-1zM795 454h1v1h-1zM809 454h1v1h-1zM822 454h1v1h-1zM835 454h1v1h-1zM849 454h1v1h-1zM862 454h1v1h-1zM6 467h1v1h-1zM20 467h1v1h-1zM33 467h1v1h-1zM46 467h1v1h-1zM60 467h1v1h-1zM73 467h1v1h-1zM86 467h1v1h-1zM100 467h1v1h-1zM113 467h1v1h-1zM127 467h1v1h-1zM140 467h1v1h-1zM153 467h1v1h-1zM167 467h1v1h-1zM180 467h1v1h-1zM193 467h1v1h-1zM207 467h1v1h-1zM220 467h1v1h-1zM234 467h1v1h-1zM247 467h1v1h-1zM260 467h1v1h-1zM274 467h1v1h-1zM287 467h1v1h-1zM300 467h1v1h-1zM314 467h1v1h-1zM327 467h1v1h-1zM341 467h1v1h-1zM354 467h1v1h-1zM367 467h1v1h-1zM381 467h1v1h-1zM394 467h1v1h-1zM407 467h1v1h-1zM421 467h1v1h-1zM434 467h1v1h-1zM448 467h1v1h-1zM461 467h1v1h-1zM474 467h1v1h-1zM488 467h1v1h-1zM501 467h1v1h-1zM514 467h1v1h-1zM528 467h1v1h-1zM541 467h1v1h-1zM555 467h1v1h-1zM568 467h1v1h-1zM581 467h1v1h-1zM595 467h1v1h-1zM608 467h1v1h-1zM621 467h1v1h-1zM635 467h1v1h-1zM648 467h1v1h-1zM662 467h1v1h-1zM675 467h1v1h-1zM688 467h1v1h-1zM702 467h1v1h-1zM715 467h1v1h-1zM728 467h1v1h-1zM742 467h1v1h-1zM755 467h1v1h-1zM769 467h1v1h-1zM782 467h1v1h-1zM795 467h1v1h-1zM809 467h1v1h-1zM822 467h1v1h-1zM835 467h1v1h-1zM849 467h1v1h-1zM862 467h1v1h-1zM6 481h1v1h-1zM20 481h1v1h-1zM33 481h1v1h-1zM46 481h1v1h-1zM60 481h1v1h-1zM73 481h1v1h-1zM86 481h1v1h-1zM100 481h1v1h-1zM113 481h1v1h-1zM127 481h1v1h-1zM140 481h1v1h-1zM153 481h1v1h-1zM167 481h1v1h-1zM180 481h1v1h-1zM193 481h1v1h-1zM207 481h1v1h-1zM220 481h1v1h-1zM234 481h1v1h-1zM247 481h1v1h-1zM260 481h1v1h-1zM274 481h1v1h-1zM287 481h1v1h-1zM300 481h1v1h-1zM314 481h1v1h-1zM327 481h1v1h-1zM341 481h1v1h-1zM354 481h1v1h-1zM367 481h1v1h-1zM381 481h1v1h-1zM394 481h1v1h-1zM407 481h1v1h-1zM421 481h1v1h-1zM434 481h1v1h-1zM448 481h1v1h-1zM461 481h1v1h-1zM474 481h1v1h-1zM488 481h1v1h-1zM501 481h1v1h-1zM514 481h1v1h-1zM528 481h1v1h-1zM541 481h1v1h-1zM555 481h1v1h-1zM568 481h1v1h-1zM581 481h1v1h-1zM595 481h1v1h-1zM608 481h1v1h-1zM621 481h1v1h-1zM635 481h1v1h-1zM648 481h1v1h-1zM662 481h1v1h-1zM675 481h1v1h-1zM688 481h1v1h-1zM702 481h1v1h-1zM715 481h1v1h-1zM728 481h1v1h-1zM742 481h1v1h-1zM755 481h1v1h-1zM769 481h1v1h-1zM782 481h1v1h-1zM795 481h1v1h-1zM809 481h1v1h-1zM822 481h1v1h-1zM835 481h1v1h-1zM849 481h1v1h-1zM862 481h1v1h-1zM6 494h1v1h-1zM20 494h1v1h-1zM33 494h1v1h-1zM46 494h1v1h-1zM60 494h1v1h-1zM73 494h1v1h-1zM86 494h1v1h-1zM100 494h1v1h-1zM113 494h1v1h-1zM127 494h1v1h-1zM140 494h1v1h-1zM153 494h1v1h-1zM167 494h1v1h-1zM180 494h1v1h-1zM193 494h1v1h-1zM207 494h1v1h-1zM220 494h1v1h-1zM234 494h1v1h-1zM247 494h1v1h-1zM260 494h1v1h-1zM274 494h1v1h-1zM287 494h1v1h-1zM300 494h1v1h-1zM314 494h1v1h-1zM327 494h1v1h-1zM341 494h1v1h-1zM354 494h1v1h-1zM367 494h1v1h-1zM381 494h1v1h-1zM394 494h1v1h-1zM407 494h1v1h-1zM421 494h1v1h-1zM434 494h1v1h-1zM448 494h1v1h-1zM461 494h1v1h-1zM474 494h1v1h-1zM488 494h1v1h-1zM501 494h1v1h-1zM514 494h1v1h-1zM528 494h1v1h-1zM541 494h1v1h-1zM555 494h1v1h-1zM568 494h1v1h-1zM581 494h1v1h-1zM595 494h1v1h-1zM608 494h1v1h-1zM621 494h1v1h-1zM635 494h1v1h-1zM648 494h1v1h-1zM662 494h1v1h-1zM675 494h1v1h-1zM688 494h1v1h-1zM702 494h1v1h-1zM715 494h1v1h-1zM728 494h1v1h-1zM742 494h1v1h-1zM755 494h1v1h-1zM769 494h1v1h-1zM782 494h1v1h-1zM795 494h1v1h-1zM809 494h1v1h-1zM822 494h1v1h-1zM835 494h1v1h-1zM849 494h1v1h-1zM862 494h1v1h-1zM6 507h1v1h-1zM20 507h1v1h-1zM33 507h1v1h-1zM46 507h1v1h-1zM60 507h1v1h-1zM73 507h1v1h-1zM86 507h1v1h-1zM100 507h1v1h-1zM113 507h1v1h-1zM127 507h1v1h-1zM140 507h1v1h-1zM153 507h1v1h-1zM167 507h1v1h-1zM180 507h1v1h-1zM193 507h1v1h-1zM207 507h1v1h-1zM220 507h1v1h-1zM234 507h1v1h-1zM247 507h1v1h-1zM260 507h1v1h-1zM274 507h1v1h-1zM287 507h1v1h-1zM300 507h1v1h-1zM314 507h1v1h-1zM327 507h1v1h-1zM341 507h1v1h-1zM354 507h1v1h-1zM367 507h1v1h-1zM381 507h1v1h-1zM394 507h1v1h-1zM407 507h1v1h-1zM421 507h1v1h-1zM434 507h1v1h-1zM448 507h1v1h-1zM461 507h1v1h-1zM474 507h1v1h-1zM488 507h1v1h-1zM501 507h1v1h-1zM514 507h1v1h-1zM528 507h1v1h-1zM541 507h1v1h-1zM555 507h1v1h-1zM568 507h1v1h-1zM581 507h1v1h-1zM595 507h1v1h-1zM608 507h1v1h-1zM621 507h1v1h-1zM635 507h1v1h-1zM648 507h1v1h-1zM662 507h1v1h-1zM675 507h1v1h-1zM688 507h1v1h-1zM702 507h1v1h-1zM715 507h1v1h-1zM728 507h1v1h-1zM742 507h1v1h-1zM755 507h1v1h-1zM769 507h1v1h-1zM782 507h1v1h-1zM795 507h1v1h-1zM809 507h1v1h-1zM822 507h1v1h-1zM835 507h1v1h-1zM849 507h1v1h-1zM862 507h1v1h-1zM6 521h1v1h-1zM20 521h1v1h-1zM33 521h1v1h-1zM46 521h1v1h-1zM60 521h1v1h-1zM73 521h1v1h-1zM86 521h1v1h-1zM100 521h1v1h-1zM113 521h1v1h-1zM127 521h1v1h-1zM140 521h1v1h-1zM153 521h1v1h-1zM167 521h1v1h-1zM180 521h1v1h-1zM193 521h1v1h-1zM207 521h1v1h-1zM220 521h1v1h-1zM234 521h1v1h-1zM247 521h1v1h-1zM260 521h1v1h-1zM274 521h1v1h-1zM287 521h1v1h-1zM300 521h1v1h-1zM314 521h1v1h-1zM327 521h1v1h-1zM341 521h1v1h-1zM354 521h1v1h-1zM367 521h1v1h-1zM381 521h1v1h-1zM394 521h1v1h-1zM407 521h1v1h-1zM421 521h1v1h-1zM434 521h1v1h-1zM448 521h1v1h-1zM461 521h1v1h-1zM474 521h1v1h-1zM488 521h1v1h-1zM501 521h1v1h-1zM514 521h1v1h-1zM528 521h1v1h-1zM541 521h1v1h-1zM555 521h1v1h-1zM568 521h1v1h-1zM581 521h1v1h-1zM595 521h1v1h-1zM608 521h1v1h-1zM621 521h1v1h-1zM635 521h1v1h-1zM648 521h1v1h-1zM662 521h1v1h-1zM675 521h1v1h-1zM688 521h1v1h-1zM702 521h1v1h-1zM715 521h1v1h-1zM728 521h1v1h-1zM742 521h1v1h-1zM755 521h1v1h-1zM769 521h1v1h-1zM782 521h1v1h-1zM795 521h1v1h-1zM809 521h1v1h-1zM822 521h1v1h-1zM835 521h1v1h-1zM849 521h1v1h-1zM862 521h1v1h-1zM6 534h1v1h-1zM20 534h1v1h-1zM33 534h1v1h-1zM46 534h1v1h-1zM60 534h1v1h-1zM73 534h1v1h-1zM86 534h1v1h-1zM100 534h1v1h-1zM113 534h1v1h-1zM127 534h1v1h-1zM140 534h1v1h-1zM153 534h1v1h-1zM167 534h1v1h-1zM180 534h1v1h-1zM193 534h1v1h-1zM207 534h1v1h-1zM220 534h1v1h-1zM234 534h1v1h-1zM247 534h1v1h-1zM260 534h1v1h-1zM274 534h1v1h-1zM287 534h1v1h-1zM300 534h1v1h-1zM314 534h1v1h-1zM327 534h1v1h-1zM341 534h1v1h-1zM354 534h1v1h-1zM367 534h1v1h-1zM381 534h1v1h-1zM394 534h1v1h-1zM407 534h1v1h-1zM421 534h1v1h-1zM434 534h1v1h-1zM448 534h1v1h-1zM461 534h1v1h-1zM474 534h1v1h-1zM488 534h1v1h-1zM501 534h1v1h-1zM514 534h1v1h-1zM528 534h1v1h-1zM541 534h1v1h-1zM555 534h1v1h-1zM568 534h1v1h-1zM581 534h1v1h-1zM595 534h1v1h-1zM608 534h1v1h-1zM621 534h1v1h-1zM635 534h1v1h-1zM648 534h1v1h-1zM662 534h1v1h-1zM675 534h1v1h-1zM688 534h1v1h-1zM702 534h1v1h-1zM715 534h1v1h-1zM728 534h1v1h-1zM742 534h1v1h-1zM755 534h1v1h-1zM769 534h1v1h-1zM782 534h1v1h-1zM795 534h1v1h-1zM809 534h1v1h-1zM822 534h1v1h-1zM835 534h1v1h-1zM849 534h1v1h-1zM862 534h1v1h-1zM6 547h1v1h-1zM20 547h1v1h-1zM33 547h1v1h-1zM46 547h1v1h-1zM60 547h1v1h-1zM73 547h1v1h-1zM86 547h1v1h-1zM100 547h1v1h-1zM113 547h1v1h-1zM127 547h1v1h-1zM140 547h1v1h-1zM153 547h1v1h-1zM167 547h1v1h-1zM180 547h1v1h-1zM193 547h1v1h-1zM207 547h1v1h-1zM220 547h1v1h-1zM234 547h1v1h-1zM247 547h1v1h-1zM260 547h1v1h-1zM274 547h1v1h-1zM287 547h1v1h-1zM300 547h1v1h-1zM314 547h1v1h-1zM327 547h1v1h-1zM341 547h1v1h-1zM354 547h1v1h-1zM367 547h1v1h-1zM381 547h1v1h-1zM394 547h1v1h-1zM407 547h1v1h-1zM421 547h1v1h-1zM434 547h1v1h-1zM448 547h1v1h-1zM461 547h1v1h-1zM474 547h1v1h-1zM488 547h1v1h-1zM501 547h1v1h-1zM514 547h1v1h-1zM528 547h1v1h-1zM541 547h1v1h-1zM555 547h1v1h-1zM568 547h1v1h-1zM581 547h1v1h-1zM595 547h1v1h-1zM608 547h1v1h-1zM621 547h1v1h-1zM635 547h1v1h-1zM648 547h1v1h-1zM662 547h1v1h-1zM675 547h1v1h-1zM688 547h1v1h-1zM702 547h1v1h-1zM715 547h1v1h-1zM728 547h1v1h-1zM742 547h1v1h-1zM755 547h1v1h-1zM769 547h1v1h-1zM782 547h1v1h-1zM795 547h1v1h-1zM809 547h1v1h-1zM822 547h1v1h-1zM835 547h1v1h-1zM849 547h1v1h-1zM862 547h1v1h-1zM6 561h1v1h-1zM20 561h1v1h-1zM33 561h1v1h-1zM46 561h1v1h-1zM60 561h1v1h-1zM73 561h1v1h-1zM86 561h1v1h-1zM100 561h1v1h-1zM113 561h1v1h-1zM127 561h1v1h-1zM140 561h1v1h-1zM153 561h1v1h-1zM167 561h1v1h-1zM180 561h1v1h-1zM193 561h1v1h-1zM207 561h1v1h-1zM220 561h1v1h-1zM234 561h1v1h-1zM247 561h1v1h-1zM260 561h1v1h-1zM274 561h1v1h-1zM287 561h1v1h-1zM300 561h1v1h-1zM314 561h1v1h-1zM327 561h1v1h-1zM341 561h1v1h-1zM354 561h1v1h-1zM367 561h1v1h-1zM381 561h1v1h-1zM394 561h1v1h-1zM407 561h1v1h-1zM421 561h1v1h-1zM434 561h1v1h-1zM448 561h1v1h-1zM461 561h1v1h-1zM474 561h1v1h-1zM488 561h1v1h-1zM501 561h1v1h-1zM514 561h1v1h-1zM528 561h1v1h-1zM541 561h1v1h-1zM555 561h1v1h-1zM568 561h1v1h-1zM581 561h1v1h-1zM595 561h1v1h-1zM608 561h1v1h-1zM621 561h1v1h-1zM635 561h1v1h-1zM648 561h1v1h-1zM662 561h1v1h-1zM675 561h1v1h-1zM688 561h1v1h-1zM702 561h1v1h-1zM715 561h1v1h-1zM728 561h1v1h-1zM742 561h1v1h-1zM755 561h1v1h-1zM769 561h1v1h-1zM782 561h1v1h-1zM795 561h1v1h-1zM809 561h1v1h-1zM822 561h1v1h-1zM835 561h1v1h-1zM849 561h1v1h-1zM862 561h1v1h-1zM6 574h1v1h-1zM20 574h1v1h-1zM33 574h1v1h-1zM46 574h1v1h-1zM60 574h1v1h-1zM73 574h1v1h-1zM86 574h1v1h-1zM100 574h1v1h-1zM113 574h1v1h-1zM127 574h1v1h-1zM140 574h1v1h-1zM153 574h1v1h-1zM167 574h1v1h-1zM180 574h1v1h-1zM193 574h1v1h-1zM207 574h1v1h-1zM220 574h1v1h-1zM234 574h1v1h-1zM247 574h1v1h-1zM260 574h1v1h-1zM274 574h1v1h-1zM287 574h1v1h-1zM300 574h1v1h-1zM314 574h1v1h-1zM327 574h1v1h-1zM341 574h1v1h-1zM354 574h1v1h-1zM367 574h1v1h-1zM381 574h1v1h-1zM394 574h1v1h-1zM407 574h1v1h-1zM421 574h1v1h-1zM434 574h1v1h-1zM448 574h1v1h-1zM461 574h1v1h-1zM474 574h1v1h-1zM488 574h1v1h-1zM501 574h1v1h-1zM514 574h1v1h-1zM528 574h1v1h-1zM541 574h1v1h-1zM555 574h1v1h-1zM568 574h1v1h-1zM581 574h1v1h-1zM595 574h1v1h-1zM608 574h1v1h-1zM621 574h1v1h-1zM635 574h1v1h-1zM648 574h1v1h-1zM662 574h1v1h-1zM675 574h1v1h-1zM688 574h1v1h-1zM702 574h1v1h-1zM715 574h1v1h-1zM728 574h1v1h-1zM742 574h1v1h-1zM755 574h1v1h-1zM769 574h1v1h-1zM782 574h1v1h-1zM795 574h1v1h-1zM809 574h1v1h-1zM822 574h1v1h-1zM835 574h1v1h-1zM849 574h1v1h-1zM862 574h1v1h-1zM6 587h1v1h-1zM20 587h1v1h-1zM33 587h1v1h-1zM46 587h1v1h-1zM60 587h1v1h-1zM73 587h1v1h-1zM86 587h1v1h-1zM100 587h1v1h-1zM113 587h1v1h-1zM127 587h1v1h-1zM140 587h1v1h-1zM153 587h1v1h-1zM167 587h1v1h-1zM180 587h1v1h-1zM193 587h1v1h-1zM207 587h1v1h-1zM220 587h1v1h-1zM234 587h1v1h-1zM247 587h1v1h-1zM260 587h1v1h-1zM274 587h1v1h-1zM287 587h1v1h-1zM300 587h1v1h-1zM314 587h1v1h-1zM327 587h1v1h-1zM341 587h1v1h-1zM354 587h1v1h-1zM367 587h1v1h-1zM381 587h1v1h-1zM394 587h1v1h-1zM407 587h1v1h-1zM421 587h1v1h-1zM434 587h1v1h-1zM448 587h1v1h-1zM461 587h1v1h-1zM474 587h1v1h-1zM488 587h1v1h-1zM501 587h1v1h-1zM514 587h1v1h-1zM528 587h1v1h-1zM541 587h1v1h-1zM555 587h1v1h-1zM568 587h1v1h-1zM581 587h1v1h-1zM595 587h1v1h-1zM608 587h1v1h-1zM621 587h1v1h-1zM635 587h1v1h-1zM648 587h1v1h-1zM662 587h1v1h-1zM675 587h1v1h-1zM688 587h1v1h-1zM702 587h1v1h-1zM715 587h1v1h-1zM728 587h1v1h-1zM742 587h1v1h-1zM755 587h1v1h-1zM769 587h1v1h-1zM782 587h1v1h-1zM795 587h1v1h-1zM809 587h1v1h-1zM822 587h1v1h-1zM835 587h1v1h-1zM849 587h1v1h-1zM862 587h1v1h-1zM6 601h1v1h-1zM20 601h1v1h-1zM33 601h1v1h-1zM46 601h1v1h-1zM60 601h1v1h-1zM73 601h1v1h-1zM86 601h1v1h-1zM100 601h1v1h-1zM113 601h1v1h-1zM127 601h1v1h-1zM140 601h1v1h-1zM153 601h1v1h-1zM167 601h1v1h-1zM180 601h1v1h-1zM193 601h1v1h-1zM207 601h1v1h-1zM220 601h1v1h-1zM234 601h1v1h-1zM247 601h1v1h-1zM260 601h1v1h-1zM274 601h1v1h-1zM287 601h1v1h-1zM300 601h1v1h-1zM314 601h1v1h-1zM327 601h1v1h-1zM341 601h1v1h-1zM354 601h1v1h-1zM367 601h1v1h-1zM381 601h1v1h-1zM394 601h1v1h-1zM407 601h1v1h-1zM421 601h1v1h-1zM434 601h1v1h-1zM448 601h1v1h-1zM461 601h1v1h-1zM474 601h1v1h-1zM488 601h1v1h-1zM501 601h1v1h-1zM514 601h1v1h-1zM528 601h1v1h-1zM541 601h1v1h-1zM555 601h1v1h-1zM568 601h1v1h-1zM581 601h1v1h-1zM595 601h1v1h-1zM608 601h1v1h-1zM621 601h1v1h-1zM635 601h1v1h-1zM648 601h1v1h-1zM662 601h1v1h-1zM675 601h1v1h-1zM688 601h1v1h-1zM702 601h1v1h-1zM715 601h1v1h-1zM728 601h1v1h-1zM742 601h1v1h-1zM755 601h1v1h-1zM769 601h1v1h-1zM782 601h1v1h-1zM795 601h1v1h-1zM809 601h1v1h-1zM822 601h1v1h-1zM835 601h1v1h-1zM849 601h1v1h-1zM862 601h1v1h-1zM6 614h1v1h-1zM20 614h1v1h-1zM33 614h1v1h-1zM46 614h1v1h-1zM60 614h1v1h-1zM73 614h1v1h-1zM86 614h1v1h-1zM100 614h1v1h-1zM113 614h1v1h-1zM127 614h1v1h-1zM140 614h1v1h-1zM153 614h1v1h-1zM167 614h1v1h-1zM180 614h1v1h-1zM193 614h1v1h-1zM207 614h1v1h-1zM220 614h1v1h-1zM234 614h1v1h-1zM247 614h1v1h-1zM260 614h1v1h-1zM274 614h1v1h-1zM287 614h1v1h-1zM300 614h1v1h-1zM314 614h1v1h-1zM327 614h1v1h-1zM341 614h1v1h-1zM354 614h1v1h-1zM367 614h1v1h-1zM381 614h1v1h-1zM394 614h1v1h-1zM407 614h1v1h-1zM421 614h1v1h-1zM434 614h1v1h-1zM448 614h1v1h-1zM461 614h1v1h-1zM474 614h1v1h-1zM488 614h1v1h-1zM501 614h1v1h-1zM514 614h1v1h-1zM528 614h1v1h-1zM541 614h1v1h-1zM555 614h1v1h-1zM568 614h1v1h-1zM581 614h1v1h-1zM595 614h1v1h-1zM608 614h1v1h-1zM621 614h1v1h-1zM635 614h1v1h-1zM648 614h1v1h-1zM662 614h1v1h-1zM675 614h1v1h-1zM688 614h1v1h-1zM702 614h1v1h-1zM715 614h1v1h-1zM728 614h1v1h-1zM742 614h1v1h-1zM755 614h1v1h-1zM769 614h1v1h-1zM782 614h1v1h-1zM795 614h1v1h-1zM809 614h1v1h-1zM822 614h1v1h-1zM835 614h1v1h-1zM849 614h1v1h-1zM862 614h1v1h-1zM6 628h1v1h-1zM20 628h1v1h-1zM33 628h1v1h-1zM46 628h1v1h-1zM60 628h1v1h-1zM73 628h1v1h-1zM86 628h1v1h-1zM100 628h1v1h-1zM113 628h1v1h-1zM127 628h1v1h-1zM140 628h1v1h-1zM153 628h1v1h-1zM167 628h1v1h-1zM180 628h1v1h-1zM193 628h1v1h-1zM207 628h1v1h-1zM220 628h1v1h-1zM234 628h1v1h-1zM247 628h1v1h-1zM260 628h1v1h-1zM274 628h1v1h-1zM287 628h1v1h-1zM300 628h1v1h-1zM314 628h1v1h-1zM327 628h1v1h-1zM341 628h1v1h-1zM354 628h1v1h-1zM367 628h1v1h-1zM381 628h1v1h-1zM394 628h1v1h-1zM407 628h1v1h-1zM421 628h1v1h-1zM434 628h1v1h-1zM448 628h1v1h-1zM461 628h1v1h-1zM474 628h1v1h-1zM488 628h1v1h-1zM501 628h1v1h-1zM514 628h1v1h-1zM528 628h1v1h-1zM541 628h1v1h-1zM555 628h1v1h-1zM568 628h1v1h-1zM581 628h1v1h-1zM595 628h1v1h-1zM608 628h1v1h-1zM621 628h1v1h-1zM635 628h1v1h-1zM648 628h1v1h-1zM662 628h1v1h-1zM675 628h1v1h-1zM688 628h1v1h-1zM702 628h1v1h-1zM715 628h1v1h-1zM728 628h1v1h-1zM742 628h1v1h-1zM755 628h1v1h-1zM769 628h1v1h-1zM782 628h1v1h-1zM795 628h1v1h-1zM809 628h1v1h-1zM822 628h1v1h-1zM835 628h1v1h-1zM849 628h1v1h-1zM862 628h1v1h-1zM6 641h1v1h-1zM20 641h1v1h-1zM33 641h1v1h-1zM46 641h1v1h-1zM60 641h1v1h-1zM73 641h1v1h-1zM86 641h1v1h-1zM100 641h1v1h-1zM113 641h1v1h-1zM127 641h1v1h-1zM140 641h1v1h-1zM153 641h1v1h-1zM167 641h1v1h-1zM180 641h1v1h-1zM193 641h1v1h-1zM207 641h1v1h-1zM220 641h1v1h-1zM234 641h1v1h-1zM247 641h1v1h-1zM260 641h1v1h-1zM274 641h1v1h-1zM287 641h1v1h-1zM300 641h1v1h-1zM314 641h1v1h-1zM327 641h1v1h-1zM341 641h1v1h-1zM354 641h1v1h-1zM367 641h1v1h-1zM381 641h1v1h-1zM394 641h1v1h-1zM407 641h1v1h-1zM421 641h1v1h-1zM434 641h1v1h-1zM448 641h1v1h-1zM461 641h1v1h-1zM474 641h1v1h-1zM488 641h1v1h-1zM501 641h1v1h-1zM514 641h1v1h-1zM528 641h1v1h-1zM541 641h1v1h-1zM555 641h1v1h-1zM568 641h1v1h-1zM581 641h1v1h-1zM595 641h1v1h-1zM608 641h1v1h-1zM621 641h1v1h-1zM635 641h1v1h-1zM648 641h1v1h-1zM662 641h1v1h-1zM675 641h1v1h-1zM688 641h1v1h-1zM702 641h1v1h-1zM715 641h1v1h-1zM728 641h1v1h-1zM742 641h1v1h-1zM755 641h1v1h-1zM769 641h1v1h-1zM782 641h1v1h-1zM795 641h1v1h-1zM809 641h1v1h-1zM822 641h1v1h-1zM835 641h1v1h-1zM849 641h1v1h-1zM862 641h1v1h-1zM6 654h1v1h-1zM20 654h1v1h-1zM33 654h1v1h-1zM46 654h1v1h-1zM60 654h1v1h-1zM73 654h1v1h-1zM86 654h1v1h-1zM100 654h1v1h-1zM113 654h1v1h-1zM127 654h1v1h-1zM140 654h1v1h-1zM153 654h1v1h-1zM167 654h1v1h-1zM180 654h1v1h-1zM193 654h1v1h-1zM207 654h1v1h-1zM220 654h1v1h-1zM234 654h1v1h-1zM247 654h1v1h-1zM260 654h1v1h-1zM274 654h1v1h-1zM287 654h1v1h-1zM300 654h1v1h-1zM314 654h1v1h-1zM327 654h1v1h-1zM341 654h1v1h-1zM354 654h1v1h-1zM367 654h1v1h-1zM381 654h1v1h-1zM394 654h1v1h-1zM407 654h1v1h-1zM421 654h1v1h-1zM434 654h1v1h-1zM448 654h1v1h-1zM461 654h1v1h-1zM474 654h1v1h-1zM488 654h1v1h-1zM501 654h1v1h-1zM514 654h1v1h-1zM528 654h1v1h-1zM541 654h1v1h-1zM555 654h1v1h-1zM568 654h1v1h-1zM581 654h1v1h-1zM595 654h1v1h-1zM608 654h1v1h-1zM621 654h1v1h-1zM635 654h1v1h-1zM648 654h1v1h-1zM662 654h1v1h-1zM675 654h1v1h-1zM688 654h1v1h-1zM702 654h1v1h-1zM715 654h1v1h-1zM728 654h1v1h-1zM742 654h1v1h-1zM755 654h1v1h-1zM769 654h1v1h-1zM782 654h1v1h-1zM795 654h1v1h-1zM809 654h1v1h-1zM822 654h1v1h-1zM835 654h1v1h-1zM849 654h1v1h-1zM862 654h1v1h-1zM6 668h1v1h-1zM20 668h1v1h-1zM33 668h1v1h-1zM46 668h1v1h-1zM60 668h1v1h-1zM73 668h1v1h-1zM86 668h1v1h-1zM100 668h1v1h-1zM113 668h1v1h-1zM127 668h1v1h-1zM140 668h1v1h-1zM153 668h1v1h-1zM167 668h1v1h-1zM180 668h1v1h-1zM193 668h1v1h-1zM207 668h1v1h-1zM220 668h1v1h-1zM234 668h1v1h-1zM247 668h1v1h-1zM260 668h1v1h-1zM274 668h1v1h-1zM287 668h1v1h-1zM300 668h1v1h-1zM314 668h1v1h-1zM327 668h1v1h-1zM341 668h1v1h-1zM354 668h1v1h-1zM367 668h1v1h-1zM381 668h1v1h-1zM394 668h1v1h-1zM407 668h1v1h-1zM421 668h1v1h-1zM434 668h1v1h-1zM448 668h1v1h-1zM461 668h1v1h-1zM474 668h1v1h-1zM488 668h1v1h-1zM501 668h1v1h-1zM514 668h1v1h-1zM528 668h1v1h-1zM541 668h1v1h-1zM555 668h1v1h-1zM568 668h1v1h-1zM581 668h1v1h-1zM595 668h1v1h-1zM608 668h1v1h-1zM621 668h1v1h-1zM635 668h1v1h-1zM648 668h1v1h-1zM662 668h1v1h-1zM675 668h1v1h-1zM688 668h1v1h-1zM702 668h1v1h-1zM715 668h1v1h-1zM728 668h1v1h-1zM742 668h1v1h-1zM755 668h1v1h-1zM769 668h1v1h-1zM782 668h1v1h-1zM795 668h1v1h-1zM809 668h1v1h-1zM822 668h1v1h-1zM835 668h1v1h-1zM849 668h1v1h-1zM862 668h1v1h-1z" fill="#000"/>
  <g stroke-width="1" fill="none" stroke-linecap="square" stroke-linejoin="bevel">
    <line x1="300.5" y1="487.5" x2="300.5" y2="427.5" stroke="#0000ff"/><line x1="300.5" y1="427.5" x2="514.5" y2="427.5" stroke="#0000ff"/><line x1="514.5" y1="427.5" x2="514.5" y2="514.5" stroke="#0000ff"/><line x1="514.5" y1="514.5" x2="535.5" y2="514.5" stroke="#0000ff"/><line x1="535.5" y1="514.5" x2="535.5" y2="527.5" stroke="#0000ff"/><line x1="387.5" y1="427.5" x2="387.5" y2="501.5" stroke="#0000ff"/><line x1="387.5" y1="501.5" x2="414.5" y2="501.5" stroke="#0000ff"/><line x1="414.5" y1="501.5" x2="414.5" y2="507.5" stroke="#0000ff"/><line x1="347.5" y1="440.5" x2="575.5" y2="440.5" stroke="#0000ff"/><line x1="347.5" y1="440.5" x2="347.5" y2="514.5" stroke="#0000ff"/><line x1="347.5" y1="514.5" x2="354.5" y2="514.5" stroke="#0000ff"/><line x1="387.5" y1="514.5" x2="401.5" y2="514.5" stroke="#0000ff"/><line x1="394.5" y1="514.5" x2="394.5" y2="474.5" stroke="#0000ff"/><line x1="394.5" y1="474.5" x2="401.5" y2="474.5" stroke="#0000ff"/><line x1="427.5" y1="474.5" x2="441.5" y2="474.5" stroke="#0000ff"/><line x1="441.5" y1="474.5" x2="441.5" y2="521.5" stroke="#0000ff"/><line x1="427.5" y1="521.5" x2="461.5" y2="521.5" stroke="#0000ff"/><line x1="494.5" y1="487.5" x2="494.5" y2="547.5" stroke="#0000ff"/><line x1="494.5" y1="487.5" x2="521.5" y2="487.5" stroke="#0000ff"/><line x1="555.5" y1="487.5" x2="575.5" y2="487.5" stroke="#0000ff"/><line x1="575.5" y1="440.5" x2="575.5" y2="541.5" stroke="#0000ff"/><line x1="575.5" y1="541.5" x2="548.5" y2="541.5" stroke="#0000ff"/><line x1="494.5" y1="547.5" x2="521.5" y2="547.5" stroke="#0000ff"/><line x1="521.5" y1="534.5" x2="508.5" y2="534.5" stroke="#0000ff"/><line x1="508.5" y1="534.5" x2="508.5" y2="574.5" stroke="#0000ff"/><line x1="300.5" y1="521.5" x2="300.5" y2="574.5" stroke="#0000ff"/><line x1="300.5" y1="574.5" x2="508.5" y2="574.5" stroke="#0000ff"/><line x1="401.5" y1="527.5" x2="394.5" y2="527.5" stroke="#0000ff"/><line x1="394.5" y1="527.5" x2="394.5" y2="574.5" stroke="#0000ff"/><line x1="448.5" y1="574.5" x2="448.5" y2="581.5" stroke="#0000ff"/><line x1="300.5" y1="608.5" x2="535.5" y2="608.5" stroke="#0000ff"/><line x1="414.5" y1="534.5" x2="414.5" y2="608.5" stroke="#0000ff"/><line x1="535.5" y1="554.5" x2="535.5" y2="608.5" stroke="#0000ff"/><rect x="297" y="496" width="8" height="1" fill="#00008c"/><rect x="297" y="512" width="8" height="1" fill="#00008c"/><rect x="300" y="492" width="1" height="8" fill="#00008c"/><rect x="300" y="488" width="1" height="4" fill="#00008c"/><rect x="300" y="516" width="1" height="5" fill="#00008c"/><ellipse cx="300.5" cy="504.0" rx="13" ry="12.5" fill="none" stroke="#00008c"/><rect x="297" y="582" width="8" height="1" fill="#00008c"/><rect x="297" y="599" width="8" height="1" fill="#00008c"/><rect x="300" y="578" width="1" height="10" fill="#00008c"/><rect x="300" y="577" width="1" height="2" fill="#00008c"/><rect x="300" y="603" width="1" height="5" fill="#00008c"/><ellipse cx="300.5" cy="591.0" rx="13" ry="12.5" fill="none" stroke="#00008c"/><polyline points="401.5,507.5 427.5,521.5 401.5,534.5 401.5,507.5" fill="none" stroke="#00008c"/><line x1="402.5" y1="514.5" x2="406.5" y2="514.5" stroke="#00008c"/><line x1="402.5" y1="527.5" x2="406.5" y2="527.5" stroke="#00008c"/><line x1="404.5" y1="529.5" x2="404.5" y2="526.5" stroke="#00008c"/><line x1="414.5" y1="507.5" x2="414.5" y2="514.5" stroke="#00008c"/><line x1="414.5" y1="534.5" x2="414.5" y2="527.5" stroke="#00008c"/><line x1="416.5" y1="512.5" x2="419.5" y2="512.5" stroke="#00008c"/><line x1="417.5" y1="511.5" x2="417.5" y2="514.5" stroke="#00008c"/><line x1="416.5" y1="529.5" x2="419.5" y2="529.5" stroke="#00008c"/><polyline points="521.5,527.5 548.5,541.5 521.5,554.5 521.5,527.5" fill="none" stroke="#00008c"/><line x1="523.5" y1="534.5" x2="526.5" y2="534.5" stroke="#00008c"/><line x1="523.5" y1="547.5" x2="526.5" y2="547.5" stroke="#00008c"/><line x1="525.5" y1="549.5" x2="525.5" y2="546.5" stroke="#00008c"/><line x1="535.5" y1="527.5" x2="535.5" y2="534.5" stroke="#00008c"/><line x1="535.5" y1="554.5" x2="535.5" y2="547.5" stroke="#00008c"/><line x1="536.5" y1="532.5" x2="540.5" y2="532.5" stroke="#00008c"/><line x1="538.5" y1="531.5" x2="538.5" y2="534.5" stroke="#00008c"/><line x1="536.5" y1="549.5" x2="540.5" y2="549.5" stroke="#00008c"/><polyline points="354.5,514.5 357.5,514.5 361.5,507.5 367.5,521.5 374.5,507.5 381.5,521.5 384.5,514.5 387.5,514.5" fill="none" stroke="#00008c"/><polyline points="461.5,521.5 464.5,521.5 468.5,514.5 474.5,527.5 481.5,514.5 488.5,527.5 491.5,521.5 494.5,521.5" fill="none" stroke="#00008c"/><polyline points="521.5,487.5 525.5,487.5 528.5,481.5 535.5,494.5 541.5,481.5 548.5,494.5 551.5,487.5 555.5,487.5" fill="none" stroke="#00008c"/><line x1="401.5" y1="474.5" x2="412.5" y2="474.5" stroke="#00008c"/><line x1="416.5" y1="474.5" x2="427.5" y2="474.5" stroke="#00008c"/><line x1="412.5" y1="467.5" x2="412.5" y2="481.5" stroke="#00008c"/><line x1="416.5" y1="467.5" x2="416.5" y2="481.5" stroke="#00008c"/><line x1="448.5" y1="574.5" x2="448.5" y2="587.5" stroke="#0000ff"/><polyline points="440.5,587.5 455.5,587.5 448.5,595.5 440.5,587.5" fill="none" stroke="#0000ff"/>
    <rect x="385.0" y="425.0" width="5" height="5" fill="#0000ff"/><rect x="392.0" y="512.0" width="5" height="5" fill="#0000ff"/><rect x="439.0" y="519.0" width="5" height="5" fill="#0000ff"/><rect x="492.0" y="519.0" width="5" height="5" fill="#0000ff"/><rect x="573.0" y="485.0" width="5" height="5" fill="#0000ff"/><rect x="298.0" y="572.0" width="5" height="5" fill="#0000ff"/><rect x="392.0" y="572.0" width="5" height="5" fill="#0000ff"/><rect x="446.0" y="572.0" width="5" height="5" fill="#0000ff"/><rect x="412.0" y="606.0" width="5" height="5" fill="#0000ff"/>
  </g>
  <g font-size="9.7px" fill="#000" stroke="#000" stroke-width="0.25">
    <text x="310.0" y="491" textLength="9.5" lengthAdjust="spacing">V1</text><text x="309.6" y="528" textLength="16.2" lengthAdjust="spacing">11V</text><text x="310.2" y="578" textLength="9.8" lengthAdjust="spacing">V2</text><text x="309.8" y="615" textLength="15.4" lengthAdjust="spacing">11V</text><text x="286.8" y="629" textLength="53.9" lengthAdjust="spacing">.tran 15s uic</text><text x="365.6" y="505" textLength="10.4" lengthAdjust="spacing">R1</text><text x="357.4" y="530" textLength="27.2" lengthAdjust="spacing">10Meg</text><text x="408.8" y="465" textLength="9.9" lengthAdjust="spacing">C1</text><text x="405.8" y="490" textLength="15.5" lengthAdjust="spacing">1µF</text><text x="421.5" y="511" textLength="10.1" lengthAdjust="spacing">U1</text><text x="421.8" y="538" textLength="28.8" lengthAdjust="spacing">LT1001</text><text x="472.8" y="512" textLength="10.6" lengthAdjust="spacing">R2</text><text x="469.7" y="536" textLength="14.5" lengthAdjust="spacing">20k</text><text x="532.9" y="479" textLength="10.5" lengthAdjust="spacing">R3</text><text x="528.0" y="503" textLength="19.5" lengthAdjust="spacing">100k</text><text x="542.0" y="531" textLength="10.2" lengthAdjust="spacing">U2</text><text x="541.8" y="558" textLength="28.8" lengthAdjust="spacing">LT1001</text>
  </g>
</svg>

<!-- outer right edge (MDI frame) -->
<div class="abs" style="left:868px;top:0;width:1px;height:676px;background:#808080;"></div>
<div class="abs" style="left:869px;top:0;width:1px;height:676px;background:#404040;"></div>
<div class="abs" style="left:870px;top:0;width:2px;height:676px;background:#fff;"></div>
<div class="abs" style="left:866px;top:0;width:2px;height:17px;background:#d4d0c8;"></div>
</body>
</html>
